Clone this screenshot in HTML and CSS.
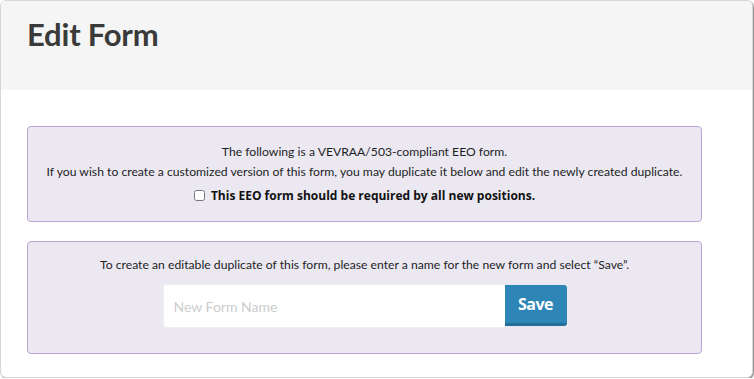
FILE: index.html
```html
<!DOCTYPE html>
<html>
<head>
<meta charset="utf-8">
<link rel="stylesheet" href="styles.css">
</head>
<body>
<div class="card">
  <div class="card-header">
    <h1 class="title">Edit Form</h1>
  </div>
  <div class="card-body">
    <div class="notice">
      <p class="line">The following is a VEVRAA/503-compliant EEO form.</p>
      <p class="line">If you wish to create a customized version of this form, you may duplicate it below and edit the newly created duplicate.</p>
      <label class="check-line"><input type="checkbox" class="check"><span>This EEO form should be required by all new positions.</span></label>
    </div>
    <div class="notice notice-dup">
      <p class="line">To create an editable duplicate of this form, please enter a name for the new form and select “Save”.</p>
      <div class="input-group">
        <input class="name-input" type="text" placeholder="New Form Name">
        <button class="save-btn">Save</button>
      </div>
    </div>
  </div>
</div>
</body>
</html>
```
FILE: styles.css
```css
* { box-sizing: border-box; }
html, body { margin: 0; padding: 0; background: #fff; }
body { font-family: Lato, "Open Sans", sans-serif; color: #1e1e1e; }
.card {
  width: 753px;
  height: 378px;
  border: 1px solid #d6d6d6;
  border-radius: 6px;
  box-shadow: 1px 1px 1px #8a8a8a;
  overflow: hidden;
  background: #fff;
}
.card-header {
  height: 89px;
  background: #f5f5f5;
  padding: 14px 26px 0;
}
.title {
  margin: 0;
  font-family: Lato, sans-serif;
  font-weight: 700;
  font-size: 31px;
  color: #3a3a3a;
  letter-spacing: -0.2px;
}
.card-body {
  padding: 36px 50px 0 26px;
  display: flex;
  flex-direction: column;
  gap: 19px;
}
.notice {
  background: #ebe8f2;
  border: 1px solid #b8a6cf;
  border-radius: 4px;
  text-align: center;
  padding: 17px 10px 0;
  height: 96px;
  font-size: 12.2px;
}
.line { margin: 0 0 5px; line-height: 15px; white-space: nowrap; }
.check-line {
  display: flex;
  justify-content: center;
  align-items: center;
  gap: 6px;
  margin-top: 8px;
  font-family: "Open Sans", sans-serif;
  font-weight: 700;
  font-size: 12px;
  color: #111;
}
.check { margin: 0; width: 11px; height: 11px; }
.notice-dup { height: 113px; padding-top: 15px; }
.input-group {
  display: flex;
  justify-content: center;
  align-items: flex-start;
  margin-top: 12px;
}
.name-input {
  width: 342px;
  height: 44px;
  border: 1px solid #eee;
  border-right: none;
  border-radius: 3px 0 0 3px;
  background: #fff;
  padding: 0 10px;
  font-family: Lato, sans-serif;
  font-size: 14px;
  outline: none;
}
.name-input::placeholder { color: #ccc; }
.save-btn {
  width: 62px;
  height: 41px;
  margin-top: 1px;
  background: #2e86b6;
  border: none;
  border-bottom: 3px solid #246f99;
  border-radius: 0 3px 3px 0;
  color: #fff;
  font-family: "Open Sans", sans-serif;
  font-weight: 700;
  font-size: 16px;
  letter-spacing: -0.5px;
}
```
